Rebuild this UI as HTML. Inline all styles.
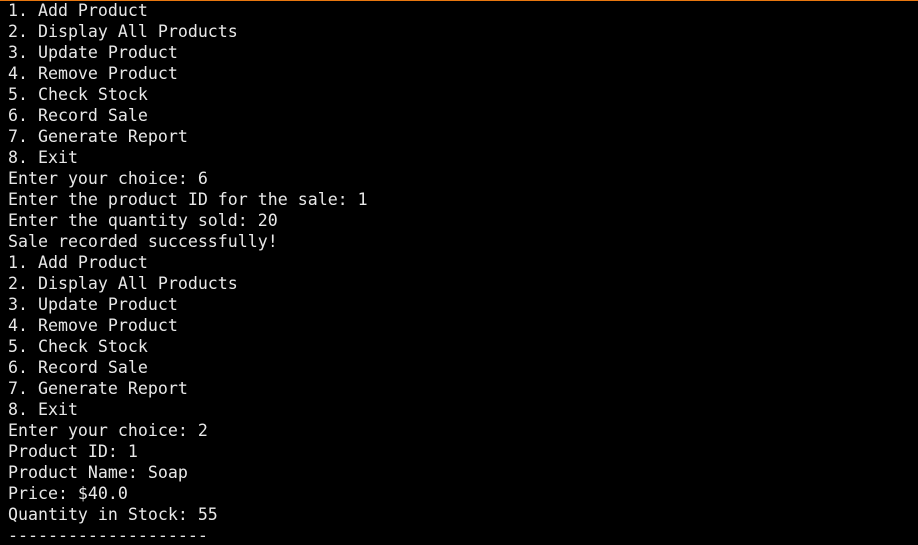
<!DOCTYPE html>
<html><head><meta charset="utf-8"><style>
html,body{margin:0;padding:0;background:#000;width:918px;height:545px;overflow:hidden}
.b{border-top:1px solid #e8770f}
.t{padding:0 0 0 8px;margin-top:-1px;color:#e8e8e8;font-family:"DejaVu Sans Mono","Liberation Mono",monospace;font-size:16.6px;line-height:21px;white-space:pre}
</style></head><body><div class="b"><div class="t">1. Add Product
2. Display All Products
3. Update Product
4. Remove Product
5. Check Stock
6. Record Sale
7. Generate Report
8. Exit
Enter your choice: 6
Enter the product ID for the sale: 1
Enter the quantity sold: 20
Sale recorded successfully!
1. Add Product
2. Display All Products
3. Update Product
4. Remove Product
5. Check Stock
6. Record Sale
7. Generate Report
8. Exit
Enter your choice: 2
Product ID: 1
Product Name: Soap
Price: $40.0
Quantity in Stock: 55
--------------------</div></div></body></html>
